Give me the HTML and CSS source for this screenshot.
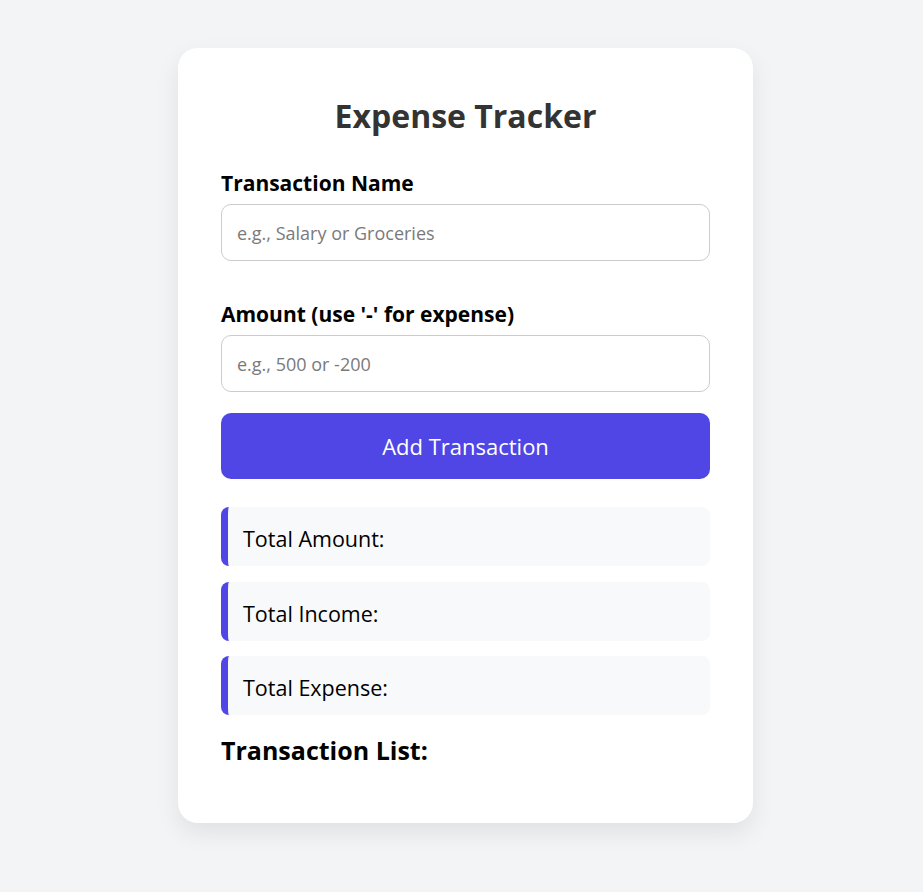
FILE: index.html
```html
<!DOCTYPE html>
<html lang="en">
<head>
<meta charset="utf-8">
<title>Expense Tracker</title>
<link rel="stylesheet" href="styles.css">
</head>
<body>
<div class="card">
  <h1 class="title">Expense Tracker</h1>
  <label class="label" for="name">Transaction Name</label>
  <input class="field" id="name" type="text" placeholder="e.g., Salary or Groceries">
  <label class="label label-second" for="amount">Amount (use '-' for expense)</label>
  <input class="field" id="amount" type="text" placeholder="e.g., 500 or -200">
  <button class="btn" type="button">Add Transaction</button>
  <div class="summary">
    <div class="box">Total Amount:</div>
    <div class="box">Total Income:</div>
    <div class="box">Total Expense:</div>
  </div>
  <h3 class="list-title">Transaction List:</h3>
</div>
</body>
</html>
```
FILE: styles.css
```css
html, body {
  margin: 0;
  padding: 0;
}
body {
  background: #f3f4f6;
  font-family: "Open Sans", "Noto Sans", sans-serif;
  padding: 48px 0 0 8px;
  min-height: 892px;
  box-sizing: border-box;
}
.card {
  width: 575px;
  margin: 0 auto;
  box-sizing: border-box;
  background: #fff;
  border-radius: 20px;
  padding: 43px 43px 43px;
  box-shadow: 0 10px 25px rgba(0, 0, 0, 0.08);
  display: flex;
  flex-direction: column;
}
.title {
  margin: 0;
  height: 50px;
  line-height: 50px;
  text-align: center;
  font-size: 32px;
  font-weight: 700;
  color: #333;
}
.label {
  display: block;
  margin-top: 30px;
  height: 24px;
  line-height: 24px;
  font-size: 21px;
  font-weight: 700;
  color: #000;
}
.label-second {
  margin-top: 41px;
}
.field {
  margin-top: 9px;
  height: 57px;
  box-sizing: border-box;
  border: 1px solid #ccc;
  border-radius: 10px;
  padding: 0 15px;
  font-family: inherit;
  font-size: 18px;
  color: #333;
  outline: none;
}
.field::placeholder {
  color: #7a7a7a;
}
.btn {
  margin-top: 21px;
  height: 66px;
  border: none;
  border-radius: 10px;
  background: #4f46e5;
  color: #fff;
  font-family: inherit;
  font-size: 22px;
}
.summary {
  margin-top: 28px;
  display: flex;
  flex-direction: column;
  gap: 15.5px;
}
.box {
  height: 59px;
  box-sizing: border-box;
  background: #f8f9fb;
  border-left: 7px solid #4f46e5;
  border-radius: 8px;
  padding: 4px 0 0 15px;
  display: flex;
  align-items: center;
  font-size: 21.5px;
  color: #000;
}
.list-title {
  margin: 20px 0 15px;
  height: 30px;
  line-height: 30px;
  font-size: 25px;
  font-weight: 700;
  color: #000;
}
```
